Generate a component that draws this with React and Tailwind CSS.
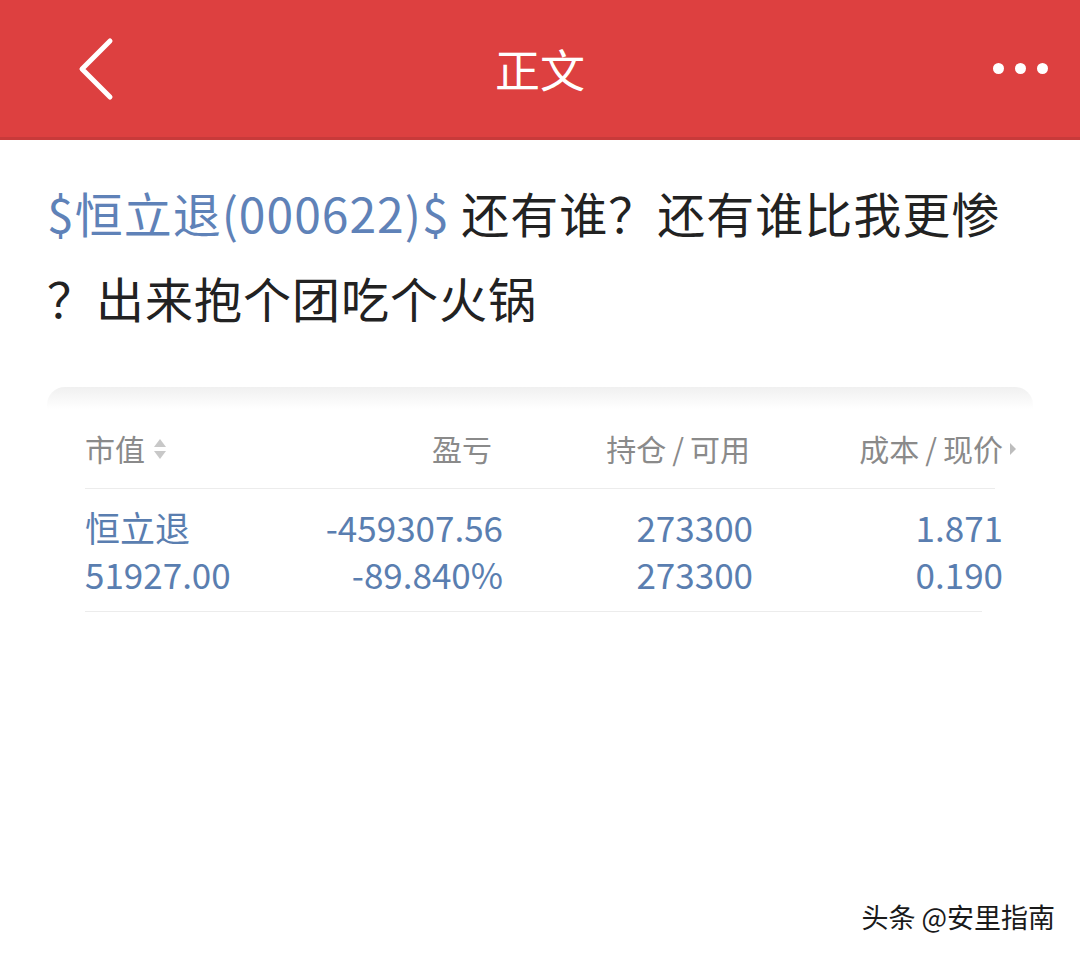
import React from 'react';

const font = { fontFamily: '"Noto Sans CJK SC", "Noto Sans", sans-serif' };

export default function App() {
  return (
    <div className="w-[1080px] h-[955px] bg-white relative overflow-hidden" style={font}>
      {/* Top bar */}
      <div className="h-[140px] bg-[#dd4040] flex items-center justify-between px-[72px] pr-[32px] border-b-[3px] border-[#c83a3a] relative">
        <svg width="44" height="64" viewBox="0 0 44 64" className="ml-[2px]">
          <path d="M36 4 L8 32 L36 60" fill="none" stroke="#fff" strokeWidth="5" strokeLinecap="round" strokeLinejoin="round" />
        </svg>
        <div className="absolute left-0 right-0 text-center text-white text-[45px] leading-none pointer-events-none">正文</div>
        <div className="flex gap-[11px] items-center">
          <span className="w-[11px] h-[11px] rounded-full bg-white" />
          <span className="w-[11px] h-[11px] rounded-full bg-white" />
          <span className="w-[11px] h-[11px] rounded-full bg-white" />
        </div>
      </div>

      {/* Post text */}
      <div className="px-[47px] pt-[30px] text-[48px] leading-[85px] text-[#222] tracking-[1px]">
        <span className="text-[#5f82b8]">$恒立退(000622)$</span> 还有谁？还有谁比我更惨
        <br />
        ？出来抱个团吃个火锅
      </div>

      {/* Holdings card */}
      <div className="mx-[47px] mt-[47px] w-[986px]">
        <div className="h-[22px] rounded-t-[18px] bg-gradient-to-b from-[#f0f0f0] to-white" />
        <div className="px-[38px]">
          <div className="grid grid-cols-[220px_198px_250px_250px] items-center h-[80px] text-[30px] text-[#8a8a8a] border-b border-[#ececec]">
            <div className="flex items-center gap-[8px]">
              市值
              <svg width="14" height="24" viewBox="0 0 14 24">
                <path d="M7 2 L13 10 L1 10 Z" fill="#c8c8c8" />
                <path d="M7 22 L13 14 L1 14 Z" fill="#c8c8c8" />
              </svg>
            </div>
            <div className="text-right pr-[11px]">盈亏</div>
            <div className="text-right pr-[3px]">
              持仓<span className="mx-[6px]">/</span>可用
            </div>
            <div className="text-right relative">
              成本<span className="mx-[6px]">/</span>现价
              <svg width="8" height="14" viewBox="0 0 8 14" className="absolute right-[-14px] top-[16px]">
                <path d="M1 1 L7 7 L1 13 Z" fill="#bdbdbd" />
              </svg>
            </div>
          </div>
          <div className="grid grid-cols-[220px_198px_250px_250px] pt-[14px] pb-[14px] text-[35px] leading-[47px] text-[#5a7eb0]">
            <div>
              <div>恒立退</div>
              <div>51927.00</div>
            </div>
            <div className="text-right">
              <div>-459307.56</div>
              <div>-89.840%</div>
            </div>
            <div className="text-right">
              <div>273300</div>
              <div>273300</div>
            </div>
            <div className="text-right">
              <div>1.871</div>
              <div>0.190</div>
            </div>
          </div>
          <div className="h-px bg-[#ececec] mr-[13px]" />
        </div>
      </div>

      {/* Watermark */}
      <div
        className="absolute right-[25px] top-[897px] text-[27px] leading-[40px] text-[#1a1a1a]"
        style={{ textShadow: '1px 1px 0 #fff, -1px -1px 0 #fff, 1px -1px 0 #fff, -1px 1px 0 #fff' }}
      >
        头条 @安里指南
      </div>
    </div>
  );
}
